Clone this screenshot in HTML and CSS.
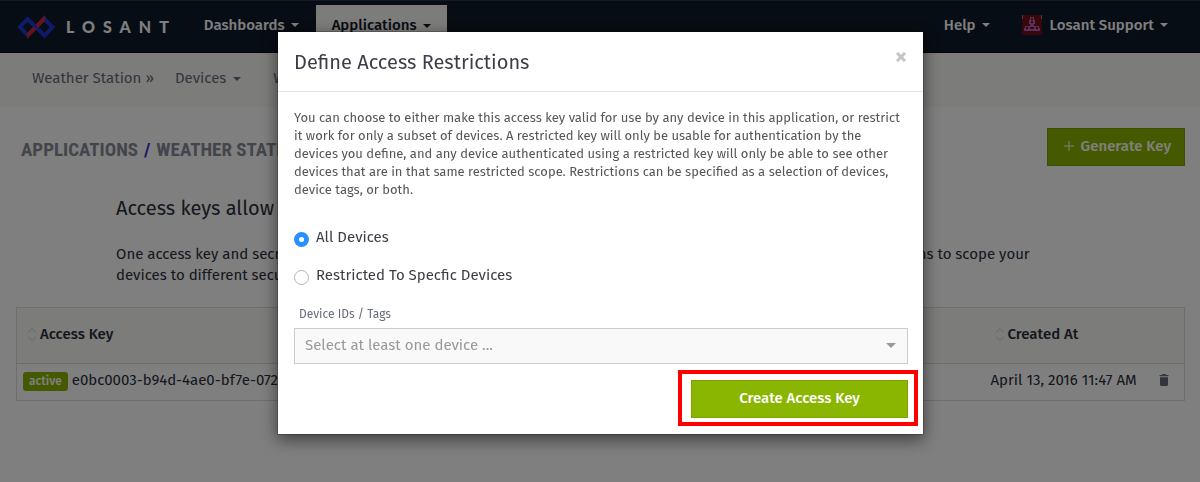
FILE: index.html
```html
<!DOCTYPE html>
<html lang="en">
<head>
<meta charset="utf-8">
<title>Losant - Access Keys</title>
<link rel="stylesheet" href="styles.css">
</head>
<body>
<header class="topbar">
  <a class="brand" href="#" aria-label="Losant">
    <svg class="brand-mark" width="40" height="24" viewBox="0 0 40 24" fill="none" stroke-width="4">
      <path d="M12 20.500 4 12 11.500 4 28.500 20.500 36.500 12 28 3.500" stroke="#1f35d6"/>
      <path d="M11 24V18L29 0V6z" fill="#c8283c"/>
      <path d="M16.500 8.800 21 13.200" stroke="#1f35d6" stroke-width="3"/>
    </svg>
    <span class="brand-name">LOSANT</span>
  </a>
  <nav class="mainnav">
    <a class="nav-item" href="#">Dashboards <span class="caret"></span></a>
    <a class="nav-item current" href="#">Applications <span class="caret"></span></a>
  </nav>
  <nav class="usernav">
    <a class="nav-item" href="#">Help <span class="caret"></span></a>
    <a class="nav-item" href="#">
      <svg class="avatar" width="20" height="20" viewBox="0 0 20 20" shape-rendering="crispEdges">
        <path fill="#6e0f12" d="M0 0h20v20H0z"/>
        <path fill="#b65fae" d="M0 0h1v4H0zM19 0h1v4h-1zM8 2h4v3h1v4h-1v2h5v2h1v3H2v-3h1v-2h5V9H7V5h1z"/>
        <path fill="#6e0f12" d="M9 3h2v2H9zM9 6h2v2H9zM4 12h2v2H4zM8 12h4v2H8zM14 12h2v2h-2z"/>
      </svg>
      Losant Support <span class="caret"></span></a>
  </nav>
</header>
<nav class="subnav">
  <a href="#">Weather Station »</a>
  <a href="#">Devices <span class="caret"></span></a>
  <a href="#">Workflows <span class="caret"></span></a>
</nav>
<main class="page">
  <div class="page-head">
    <h1 class="crumbs"><a href="#">Applications</a><span class="slash">/</span><a href="#">Weather Station</a></h1>
    <button class="btn generate" type="button">
      <svg width="10" height="10" viewBox="0 0 10 10" fill="none" stroke="currentColor"><path d="M5 0v10M0 5h10"/></svg>
      Generate Key</button>
  </div>
  <section class="intro">
    <h2>Access keys allow devices to authenticate with Losant.</h2>
    <p>One access key and secret can be used for all of your devices, or you can create many other keys with device restrictions to scope your devices to different security levels.</p>
  </section>
  <table class="keys">
    <thead>
      <tr>
        <th class="col-key"><span class="sort"><svg width="10" height="15" viewBox="0 0 10 15" fill="none" stroke="#cfcfcb"><path d="M1 5.500 5 1.500 9 5.500M1 9.500 5 13.500 9 9.500"/></svg>Access Key</span></th>
        <th></th>
        <th class="col-date"><span class="sort"><svg width="10" height="15" viewBox="0 0 10 15" fill="none" stroke="#cfcfcb"><path d="M1 5.500 5 1.500 9 5.500M1 9.500 5 13.500 9 9.500"/></svg>Created At</span></th>
      </tr>
    </thead>
    <tbody>
      <tr>
        <td><span class="badge">active</span>e0bc0003-b94d-4ae0-bf7e-0724c3</td>
        <td></td>
        <td><div class="date">April 13, 2016 11:47 AM
          <button class="trash" type="button" aria-label="Delete"><svg width="10" height="12" viewBox="0 0 10 12" fill="currentColor"><path d="M3.500 0h3l.5 1h2.500v1.300H.5V1H3zM1 3.200h8V10.500Q9 12 7.500 12h-5Q1 12 1 10.500z"/></svg></button></div></td>
      </tr>
    </tbody>
  </table>
</main>
<div class="overlay">
  <form class="modal" role="dialog" aria-labelledby="dialog-title">
    <div class="modal-head">
      <h3 id="dialog-title">Define Access Restrictions</h3>
      <button class="close" type="button" aria-label="Close"><svg width="10" height="10" viewBox="0 0 10 10" fill="none" stroke="currentColor" stroke-width="3"><path d="M1 1 9 9M9 1 1 9"/></svg></button>
    </div>
    <div class="modal-body">
      <p class="help">You can choose to either make this access key valid for use by any device in this application, or restrict it work for only a subset of devices. A restricted key will only be usable for authentication by the devices you define, and any device authenticated using a restricted key will only be able to see other devices that are in that same restricted scope. Restrictions can be specified as a selection of devices, device tags, or both.</p>
      <label class="choice"><input type="radio" name="scope" checked>All Devices</label>
      <label class="choice"><input type="radio" name="scope">Restricted To Specfic Devices</label>
      <label class="field-label" for="devices">Device IDs / Tags</label>
      <div class="picker">
        <select id="devices" disabled><option>Select at least one device ...</option></select>
      </div>
      <div class="actions">
        <button class="btn create" type="submit">Create Access Key</button>
      </div>
    </div>
  </form>
</div>
</body>
</html>
```
FILE: styles.css
```css
* { box-sizing: border-box; }

body {
  margin: 0;
  background: #fff;
  color: #2a2e3b;
  font: 15px/21px "Fira Sans", "Noto Sans", sans-serif;
}

a { color: inherit; text-decoration: none; }
h1, h2, h3, p { margin: 0; font-weight: 400; }
button { font: inherit; }

.caret {
  border: 4px solid transparent;
  border-top-color: currentColor;
  border-bottom: 0;
}

.topbar {
  display: flex;
  align-items: center;
  height: 53px;
  padding: 0 16px;
  background: #0f1a28;
  border-top: 1px solid #2a3644;
  border-bottom: 1px solid #000;
  color: #fff;
}
.brand { display: flex; align-items: center; gap: 10px; }
.brand-name { font: 900 16px/20px Lato, sans-serif; letter-spacing: 8px; }
.mainnav, .usernav { display: flex; align-self: stretch; }
.mainnav { gap: 1px; margin-left: 11px; }
.usernav { margin-left: auto; }
.nav-item {
  display: flex;
  align-items: center;
  gap: 6px;
  height: 48px;
  padding: 0 16px;
  font-weight: 500;
}
.nav-item.current { height: 47px; margin-top: 4px; padding-bottom: 6px; background: #f9f8f4; color: #0f1a28; }
.avatar { margin-right: 2px; }

.subnav {
  display: flex;
  gap: 32px;
  padding: 15px 32px 18px;
  background: #f9f8f4;
  color: #676b7b;
}
.subnav a { display: flex; align-items: center; gap: 7px; }
.subnav a:first-child { margin-right: -11px; }

.page { padding: 21px 15px 0 16px; }
.page-head {
  display: flex;
  align-items: flex-start;
  justify-content: space-between;
  padding-left: 5px;
}
.crumbs {
  display: flex;
  gap: 6px;
  padding-top: 11px;
  color: #878b98;
  font: 700 19px/22px "Roboto Condensed", "Open Sans Condensed", sans-serif;
  text-transform: uppercase;
}
.slash { color: #1f35d6; }

.btn {
  display: flex;
  align-items: center;
  justify-content: center;
  height: 38px;
  padding: 0 13px 2px;
  border: 1px solid #7ba200;
  background: #8ab500;
  color: #fff;
  font-weight: 500;
}
.generate { gap: 7px; padding-left: 16px; }

.intro { padding: 29px 110px 21px 100px; }
.intro h2 { margin-bottom: 23px; font-size: 20px; line-height: 26px; }

.keys {
  width: 100%;
  border: 1px solid #dcdcdc;
  border-collapse: collapse;
  table-layout: fixed;
}
.keys th {
  height: 56px;
  padding: 0 10px 2px;
  border-bottom: 1px solid #dcdcdc;
  background: #f9f8f4;
  font-weight: 500;
  text-align: left;
}
.keys td { height: 37px; padding: 0 6px 4px; white-space: nowrap; }
.col-key { width: 400px; }
.col-date { width: 200px; }
.sort { display: flex; align-items: center; gap: 3px; }
.badge {
  display: inline-block;
  margin-right: 4px;
  padding: 0 6px;
  border-radius: 3px;
  background: #8ab500;
  color: #fff;
  font-size: 12px;
  font-weight: 500;
  line-height: 19px;
}
.date { display: flex; align-items: center; justify-content: space-between; padding-right: 9px; }
.trash { display: flex; padding: 0; border: 0; background: none; color: #676b7b; }

.overlay {
  position: fixed;
  inset: 0;
  display: flex;
  align-items: flex-start;
  justify-content: center;
  padding: 31px 15px 32px 16px;
  background: rgba(0, 0, 0, .5);
}
.modal {
  flex: 0 1 647px;
  border: 1px solid rgba(0, 0, 0, .2);
  background: #fff;
  background-clip: padding-box;
  box-shadow: 0 5px 15px rgba(0, 0, 0, .5);
  color: #3b3e48;
}
.modal-head {
  display: flex;
  align-items: center;
  justify-content: space-between;
  height: 60px;
  padding: 0 17px 0 16px;
  border-bottom: 1px solid #e5e5e5;
}
.modal-head h3 { font-size: 20px; line-height: 26px; }
.close { padding: 0; border: 0; background: none; color: #c4c4c4; display: flex; margin-bottom: 9px; }
.modal-body { padding: 17px 15px 16px 16px; }
.help { margin-bottom: 28px; color: #565656; font-size: 13px; line-height: 18px; }
.choice { display: flex; align-items: center; gap: 7px; margin-bottom: 17px; }
.choice input {
  appearance: none;
  width: 15px;
  height: 15px;
  margin: 3px 0 0;
  border: 1px solid #b5b5b5;
  border-radius: 50%;
  background: #fff;
}
.choice input:checked { border: 5px solid #2b90ff; }
.field-label { display: block; margin: 0 5px 3px; color: #676b7b; font-size: 12px; line-height: 22px; }
.picker { position: relative; }
.picker::after {
  content: "";
  position: absolute;
  top: 15px;
  right: 12px;
  border: 5px solid transparent;
  border-top-color: #999;
  border-bottom: 0;
}
.picker select {
  appearance: none;
  display: block;
  width: 100%;
  height: 36px;
  padding: 0 10px 2px;
  border: 1px solid #ccc;
  border-radius: 0;
  background: #f9f9f9;
  color: #999;
  font: inherit;
  opacity: 1;
}
.actions { display: flex; justify-content: flex-end; margin-top: 16px; }
.create { position: relative; width: 217px; }
.create::after {
  content: "";
  position: absolute;
  inset: -11px -11px -9px -14px;
  border: 4px solid #f00;
}
```
